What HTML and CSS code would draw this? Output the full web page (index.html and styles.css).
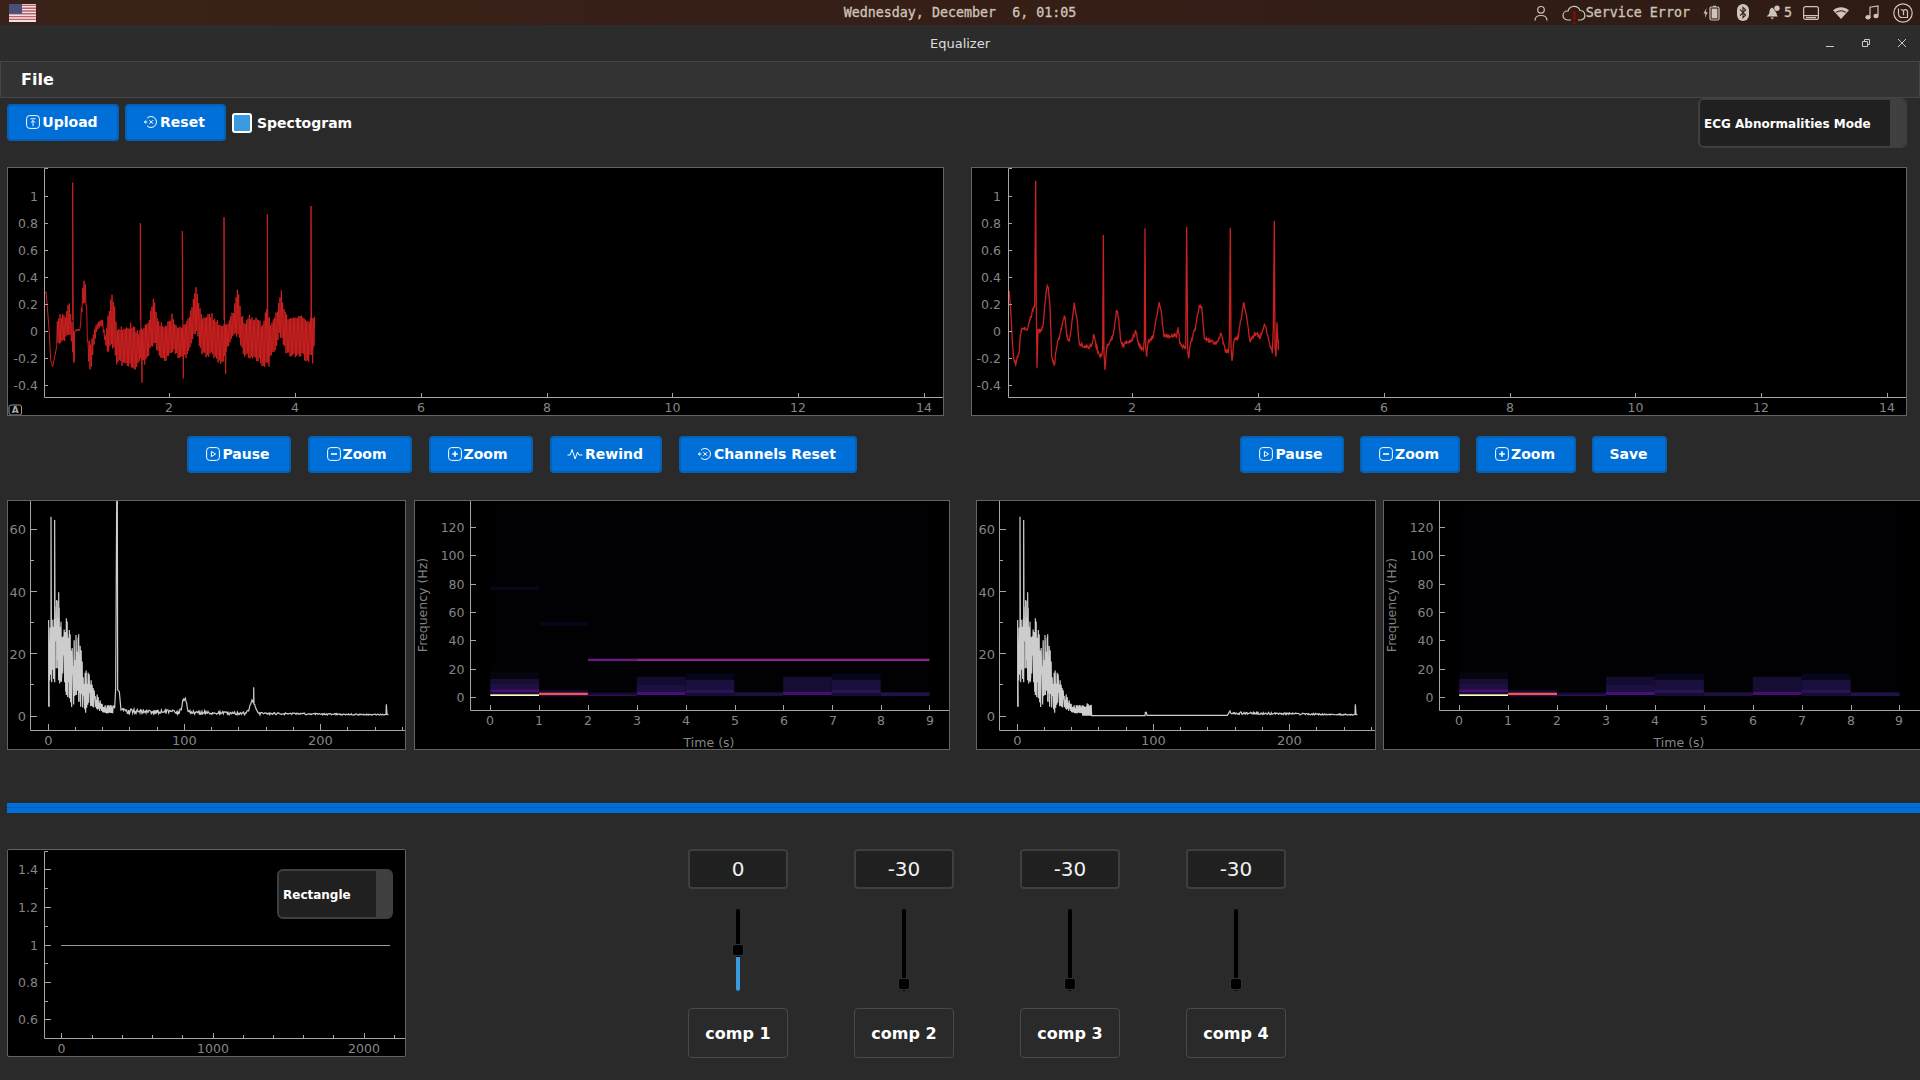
FILE: index.html
```html
<!DOCTYPE html>
<html lang="en">
<head>
<meta charset="utf-8">
<title>Equalizer</title>
<link rel="stylesheet" href="styles.css">
</head>
<body>
<svg class="sprite" aria-hidden="true">
  <symbol id="i-upload" viewBox="0 0 14 14"><rect x=".6" y=".6" width="12.800" height="12.800" rx="3"/><path d="M4.500 3.800h5M7 11V5.600M4.900 7.600 7 5.500l2.100 2.100"/></symbol>
  <symbol id="i-play" viewBox="0 0 14 14"><rect x=".6" y=".6" width="12.800" height="12.800" rx="3"/><path d="M5.400 4.400v5.200L9.600 7z"/></symbol>
  <symbol id="i-minus" viewBox="0 0 14 14"><rect x=".6" y=".6" width="12.800" height="12.800" rx="3"/><path class="thick" d="M4 7h6"/></symbol>
  <symbol id="i-plus" viewBox="0 0 14 14"><rect x=".6" y=".6" width="12.800" height="12.800" rx="3"/><path class="thick" d="M4.200 7h5.600M7 4.200v5.600"/></symbol>
  <symbol id="i-reset" viewBox="0 0 14 14"><path d="M3 3.200A5.500 5.500 0 1 1 3 10.800"/><path d="M5.400 5.200l3.600 3.600M9 5.200 5.400 8.800"/><path d="M.4 7h3M2.200 5.400.4 7l1.800 1.600"/></symbol>
  <symbol id="i-pulse" viewBox="0 0 16 14"><path d="M.5 8h2.600l2-5.500 3 9.500 2.400-7 1.400 3h3.600"/></symbol>
</svg>

<header class="topbar">
  <div class="topbar-left">
    <svg class="flag" viewBox="0 0 27 18" width="27" height="18">
      <rect width="27" height="18" fill="#e8e3e3"/>
      <path d="M0 1.400h27M0 4.200h27M0 7h27M0 9.800h27M0 12.600h27M0 15.400h27" stroke="#c4606a" stroke-width="1.400"/>
      <rect width="13" height="9.800" fill="#4a4f78"/>
    </svg>
  </div>
  <div class="clock">Wednesday, December  6, 01:05</div>
  <div class="tray">
    <svg class="tray-icon user" viewBox="0 0 14 16" width="14" height="16"><circle cx="7" cy="4.800" r="3.300"/><path d="M1 15.500c0-3.400 2.600-5 6-5s6 1.600 6 5"/></svg>
    <span class="cloud-item">
      <svg class="tray-icon" viewBox="0 0 24 24" width="24" height="24"><path d="M9 19H5.500a4.500 4.500 0 0 1 0-9H6a6.300 6.300 0 0 1 12-.5 4.800 4.800 0 0 1 1 9.500h-3"/><path class="alert" d="M12.500 10v9M12.500 21v2"/></svg>
      <span class="tray-text">Service Error</span>
    </span>
    <svg class="tray-icon battery" viewBox="0 0 17 16" width="17" height="16"><path class="solid" d="M3.500 3 .5 8.600h2L1.800 13l3-5.800h-2z"/><rect x="7" y="2" width="9" height="13" rx="1.500"/><path class="solid" d="M10 .7h3v1.300h-3z"/><rect class="solid" x="8.600" y="3.600" width="5.800" height="9.800"/></svg>
    <svg class="tray-icon bt" viewBox="0 0 12 17" width="12" height="17"><rect class="solid" x="0" y="0" width="12" height="17" rx="6"/><path class="cut" d="M3 5.300 8.600 11 6 13.600V3.400L8.600 6 3 11.700"/></svg>
    <span class="bell-item">
      <svg class="tray-icon" viewBox="0 0 15 15" width="15" height="15"><path class="solid" d="M6.500 2.500c-2.500.5-3 2.500-3 4.500 0 2-1.500 3-3 4.500h11.500c-1-1-1.500-2-1.500-3.500zM4.500 12.500h3.500l-1.800 2z"/><circle class="solid" cx="11" cy="3.200" r="2.700"/></svg>
      <span class="tray-text">5</span>
    </span>
    <svg class="tray-icon drive" viewBox="0 0 16 14" width="16" height="14"><rect x=".6" y=".6" width="14.800" height="12.800" rx="2"/><path d="M1 9.700h14M3 11.600h10"/></svg>
    <svg class="tray-icon wifi" viewBox="0 0 16 12" width="16" height="12"><path class="solid" d="M0 3.200C4.500-.9 11.500-.9 16 3.200L8 12z"/><path class="cut" d="M3 5.400c3-2 7-2 10 0"/></svg>
    <svg class="tray-icon music" viewBox="0 0 14 15" width="14" height="15"><path d="M5 12V2.200L13 1v9.500"/><ellipse class="solid" cx="3" cy="12.200" rx="2.600" ry="2.200"/><ellipse class="solid" cx="11" cy="11" rx="2.600" ry="2.200"/></svg>
    <svg class="tray-icon mint" viewBox="0 0 20 20" width="20" height="20"><circle cx="10" cy="10" r="9.200"/><path d="M5.500 5.500v5.500a3.500 3.500 0 0 0 3.500 3.500h5.500V8.700a2 2 0 0 0-4 0v3.500M10.500 8.700a2 2 0 0 0-2.700-1.800"/></svg>
  </div>
</header>

<div class="titlebar">
  <span></span>
  <span class="title">Equalizer</span>
  <div class="win-controls">
    <svg viewBox="0 0 8 8" width="8" height="8"><path d="M0 7.500h8"/></svg>
    <svg viewBox="0 0 8 8" width="8" height="8"><path d="M.5 2.500h5v5h-5zM2.500 2.500V.5h5v5h-2"/></svg>
    <svg viewBox="0 0 8 8" width="8" height="8"><path d="M0 0l8 8M8 0 0 8"/></svg>
  </div>
</div>

<nav class="menubar"><span class="menu-item">File</span></nav>

<section class="toolbar">
  <button class="btn w-upload"><svg class="ico"><use href="#i-upload"/></svg>Upload</button>
  <button class="btn w-reset"><svg class="ico"><use href="#i-reset"/></svg> Reset</button>
  <label class="check"><span class="check-box"></span>Spectogram</label>
  <div class="combo combo-mode"><span class="combo-text">ECG Abnormalities Mode</span><span class="combo-arrow"></span></div>
</section>

<section class="wave-row">
  <div class="plot">
    <svg class="chart" viewBox="8 168 935 247" width="935" height="247">
      <path class="wave" id="wave-noisy"/>
      <path class="axis" d="M48 168.500h-3.500V397.500H943M44 196.500h4M44 223.500h4M44 250.500h4M44 277.500h4M44 304.500h4M44 331.500h4M44 358.500h4M44 385.500h4M169.500 397v-4M295.500 397v-4M421.500 397v-4M547.500 397v-4M672.500 397v-4M798.500 397v-4M924.500 397v-4"/>
      <g class="lbl end">
        <text x="38" y="201">1</text><text x="38" y="228">0.8</text><text x="38" y="255">0.6</text><text x="38" y="282">0.4</text><text x="38" y="309">0.2</text><text x="38" y="336">0</text><text x="38" y="363">-0.2</text><text x="38" y="390">-0.4</text>
      </g>
      <g class="lbl mid">
        <text x="169" y="412">2</text><text x="295" y="412">4</text><text x="421" y="412">6</text><text x="547" y="412">8</text><text x="672.500" y="412">10</text><text x="798" y="412">12</text><text x="924" y="412">14</text>
      </g>
      <rect class="auto-box" x="9" y="405" width="12.500" height="10" rx="2"/>
      <text class="auto-a" x="15.200" y="412.800">A</text>
    </svg>
  </div>
  <div class="plot">
    <svg class="chart" viewBox="972 168 934 247" width="934" height="247">
      <path class="wave wave-clean" id="wave-clean"/>
      <path class="axis" d="M1012 168.500h-3.500V397.500H1906M1008 196.500h4M1008 223.500h4M1008 250.500h4M1008 277.500h4M1008 304.500h4M1008 331.500h4M1008 358.500h4M1008 385.500h4M1132.500 397v-4M1258.500 397v-4M1384.500 397v-4M1510.500 397v-4M1635.500 397v-4M1761.500 397v-4M1887.500 397v-4"/>
      <g class="lbl end">
        <text x="1001" y="201">1</text><text x="1001" y="228">0.8</text><text x="1001" y="255">0.6</text><text x="1001" y="282">0.4</text><text x="1001" y="309">0.2</text><text x="1001" y="336">0</text><text x="1001" y="363">-0.2</text><text x="1001" y="390">-0.4</text>
      </g>
      <g class="lbl mid">
        <text x="1132" y="412">2</text><text x="1258" y="412">4</text><text x="1384" y="412">6</text><text x="1510" y="412">8</text><text x="1635.500" y="412">10</text><text x="1761" y="412">12</text><text x="1887" y="412">14</text>
      </g>
    </svg>
  </div>
</section>

<section class="transport">
  <div class="btn-group group-left">
    <button class="btn w-104"><svg class="ico"><use href="#i-play"/></svg>Pause</button>
    <button class="btn w-104 btn-tail"><svg class="ico"><use href="#i-minus"/></svg>Zoom</button>
    <button class="btn w-104 btn-tail"><svg class="ico"><use href="#i-plus"/></svg>Zoom</button>
    <button class="btn w-112"><svg class="ico ico-wide"><use href="#i-pulse"/></svg>Rewind</button>
    <button class="btn w-178"><svg class="ico"><use href="#i-reset"/></svg>Channels Reset</button>
  </div>
  <div class="btn-group group-right">
    <button class="btn w-104"><svg class="ico"><use href="#i-play"/></svg>Pause</button>
    <button class="btn w-100"><svg class="ico"><use href="#i-minus"/></svg>Zoom</button>
    <button class="btn w-100"><svg class="ico"><use href="#i-plus"/></svg>Zoom</button>
    <button class="btn w-75">Save</button>
  </div>
</section>

<section class="analysis-row">
  <div class="plot plot-spectrum">
    <svg class="chart" viewBox="8 501 397 248" width="397" height="248">
      <path class="spec-line" id="spectrum-a"/>
      <path class="axis" d="M30.500 501V730.500H405M31 529.500h6M31 560.500h3M31 591.500h6M31 622.500h3M31 653.500h6M31 684.500h3M31 716.500h6M48.500 730v-6M75.500 730v-3M102.500 730v-3M129.500 730v-3M157.500 730v-3M184.500 730v-6M211.500 730v-3M238.500 730v-3M266.500 730v-3M293.500 730v-3M320.500 730v-6M347.500 730v-3M375.500 730v-3M402.500 730v-3"/>
      <g class="lbl end lbl-13"><text x="26" y="534">60</text><text x="26" y="596.500">40</text><text x="26" y="658.500">20</text><text x="26" y="721">0</text></g>
      <g class="lbl mid lbl-13"><text x="48.500" y="745">0</text><text x="184.500" y="745">100</text><text x="320.500" y="745">200</text></g>
    </svg>
  </div>
  <div class="plot plot-sgram">
    <svg class="chart" viewBox="415 501 534 248" width="534" height="248">
      <g id="sgram-a"></g>
      <path class="axis" d="M470.500 501V710.500H949M471 527.500h5M471 555.500h5M471 584.500h5M471 612.500h5M471 640.500h5M471 669.500h5M471 697.500h5M490.500 710v-5M539.500 710v-5M588.500 710v-5M637.500 710v-5M686.500 710v-5M735.500 710v-5M783.500 710v-5M832.500 710v-5M881.500 710v-5M929.500 710v-5"/>
      <g class="lbl end"><text x="464.500" y="532">120</text><text x="464.500" y="560">100</text><text x="464.500" y="589">80</text><text x="464.500" y="617">60</text><text x="464.500" y="645">40</text><text x="464.500" y="674">20</text><text x="464.500" y="702">0</text></g>
      <g class="lbl mid"><text x="490" y="725">0</text><text x="539" y="725">1</text><text x="588" y="725">2</text><text x="637" y="725">3</text><text x="686" y="725">4</text><text x="735" y="725">5</text><text x="784" y="725">6</text><text x="833" y="725">7</text><text x="881" y="725">8</text><text x="930" y="725">9</text></g>
      <text class="lbl mid" x="709" y="747">Time (s)</text>
      <text class="lbl mid" transform="translate(426.500 605) rotate(-90)">Frequency (Hz)</text>
    </svg>
  </div>
  <div class="plot plot-spectrum plot-spectrum-r">
    <svg class="chart" viewBox="977 501 398 248" width="398" height="248">
      <path class="spec-line" id="spectrum-c"/>
      <path class="axis" d="M999.500 501V730.500H1375M1000 529.500h6M1000 560.500h3M1000 591.500h6M1000 622.500h3M1000 653.500h6M1000 684.500h3M1000 716.500h6M1017.500 730v-6M1044.500 730v-3M1071.500 730v-3M1098.500 730v-3M1126.500 730v-3M1153.500 730v-6M1180.500 730v-3M1207.500 730v-3M1235.500 730v-3M1262.500 730v-3M1289.500 730v-6M1316.500 730v-3M1344.500 730v-3M1371.500 730v-3"/>
      <g class="lbl end lbl-13"><text x="995" y="534">60</text><text x="995" y="596.500">40</text><text x="995" y="658.500">20</text><text x="995" y="721">0</text></g>
      <g class="lbl mid lbl-13"><text x="1017.500" y="745">0</text><text x="1153.500" y="745">100</text><text x="1289.500" y="745">200</text></g>
    </svg>
  </div>
  <div class="plot plot-sgram plot-sgram-r">
    <svg class="chart" viewBox="1384 501 536 248" width="536" height="248">
      <g id="sgram-b"></g>
      <path class="axis" d="M1439.500 501V710.500H1920M1440 527.500h5M1440 555.500h5M1440 584.500h5M1440 612.500h5M1440 640.500h5M1440 669.500h5M1440 697.500h5M1459.500 710v-5M1508.500 710v-5M1557.500 710v-5M1606.500 710v-5M1655.500 710v-5M1704.500 710v-5M1753.500 710v-5M1802.500 710v-5M1851.500 710v-5M1899.500 710v-5"/>
      <g class="lbl end"><text x="1433.500" y="532">120</text><text x="1433.500" y="560">100</text><text x="1433.500" y="589">80</text><text x="1433.500" y="617">60</text><text x="1433.500" y="645">40</text><text x="1433.500" y="674">20</text><text x="1433.500" y="702">0</text></g>
      <g class="lbl mid"><text x="1459" y="725">0</text><text x="1508" y="725">1</text><text x="1557" y="725">2</text><text x="1606" y="725">3</text><text x="1655" y="725">4</text><text x="1704" y="725">5</text><text x="1753" y="725">6</text><text x="1802" y="725">7</text><text x="1851" y="725">8</text><text x="1899" y="725">9</text></g>
      <text class="lbl mid" x="1679" y="747">Time (s)</text>
      <text class="lbl mid" transform="translate(1395.500 605) rotate(-90)">Frequency (Hz)</text>
    </svg>
  </div>
</section>

<div class="position-slider"></div>

<section class="eq-row">
  <div class="plot plot-window">
    <svg class="chart" viewBox="8 850 397 206" width="397" height="206">
      <path class="win-line" d="M61 945.500H390"/>
      <path class="axis" d="M48 851.500h-3.500V1038.500H405M45 869.500h6M45 888.500h3M45 907.500h6M45 926.500h3M45 945.500h6M45 963.500h3M45 982.500h6M45 1001.500h3M45 1019.500h6M61.500 1038v-5M92.500 1038v-3M122.500 1038v-3M152.500 1038v-3M182.500 1038v-3M213.500 1038v-5M243.500 1038v-3M273.500 1038v-3M303.500 1038v-3M333.500 1038v-3M364.500 1038v-5M394.500 1038v-3"/>
      <g class="lbl end"><text x="38" y="874">1.4</text><text x="38" y="912">1.2</text><text x="38" y="950">1</text><text x="38" y="987">0.8</text><text x="38" y="1024">0.6</text></g>
      <g class="lbl mid"><text x="61.500" y="1053">0</text><text x="213" y="1053">1000</text><text x="364" y="1053">2000</text></g>
    </svg>
    <div class="combo combo-window"><span class="combo-text">Rectangle</span><span class="combo-arrow"></span></div>
  </div>
  <div class="bands">
    <div class="band">
      <div class="band-value">0</div>
      <div class="track"><span class="track-fill"></span><span class="handle handle-mid"></span></div>
      <div class="band-label">comp 1</div>
    </div>
    <div class="band">
      <div class="band-value">-30</div>
      <div class="track"><span class="handle handle-min"></span></div>
      <div class="band-label">comp 2</div>
    </div>
    <div class="band">
      <div class="band-value">-30</div>
      <div class="track"><span class="handle handle-min"></span></div>
      <div class="band-label">comp 3</div>
    </div>
    <div class="band">
      <div class="band-value">-30</div>
      <div class="track"><span class="handle handle-min"></span></div>
      <div class="band-label">comp 4</div>
    </div>
  </div>
</section>
<script src="charts.js"></script>
</body>
</html>
```
FILE: styles.css
```css
* { box-sizing: border-box; }
html, body { margin: 0; padding: 0; }
body {
  width: 1920px;
  height: 1080px;
  overflow: hidden;
  background: #2a2a2a;
  color: #fff;
  font-family: "DejaVu Sans", sans-serif;
}
.sprite { position: absolute; width: 0; height: 0; }

/* Desktop top bar */
.topbar {
  height: 25px;
  display: grid;
  grid-template-columns: 1fr auto 1fr;
  align-items: center;
  background: linear-gradient(90deg, #3b2218, #2f1b15);
  color: #d0c4b8;
  font-family: "DejaVu Sans Mono", monospace;
  font-size: 13.33px;
  -webkit-text-stroke: 0.3px #d0c4b8;
}
.topbar-left { padding-left: 9px; display: flex; }
.flag { display: block; }
.clock { white-space: pre; }
.tray { display: flex; align-items: center; justify-content: flex-end; padding-right: 7px; }
.tray-icon { display: block; fill: none; stroke: #d0c4b8; stroke-width: 1.2; flex: none; }
.tray-icon .solid { fill: #d0c4b8; stroke: none; }
.tray-icon .cut { stroke: #33201a; fill: none; stroke-width: 1.1; }
.tray-icon .alert { stroke: #b00000; stroke-width: 1.6; }
.cloud-item, .bell-item { display: flex; align-items: center; }
.tray-text { line-height: 25px; }
.user { margin-right: 14px; }
.cloud-item { margin-right: 13px; }
.battery { margin-right: 17px; }
.bt { margin-right: 17px; }
.bell-item { margin-right: 11px; }
.bell-item .tray-text { margin-left: 3px; }
.drive { margin-right: 14px; }
.wifi { margin-right: 16px; }
.music { margin-right: 14px; }

/* Window title */
.titlebar {
  height: 36px;
  display: grid;
  grid-template-columns: 1fr auto 1fr;
  align-items: center;
  background: #2c2c2c;
}
.title { font-size: 13px; color: #dcdcdc; }
.win-controls { display: flex; justify-content: flex-end; gap: 28px; padding-right: 14px; }
.win-controls svg { fill: none; stroke: #c8c8c8; stroke-width: 1; display: block; }

.menubar {
  height: 37px;
  display: flex;
  align-items: center;
  padding-left: 20px;
  background: #333;
  border: 1px solid #454545;
}
.menu-item { font-size: 16px; font-weight: 700; }

/* Buttons */
.btn {
  height: 37px;
  margin: 0;
  padding: 0 2px 2px 0;
  display: inline-flex;
  align-items: center;
  justify-content: center;
  gap: 2px;
  background: #0070d8;
  border: 2px solid #0660b4;
  border-radius: 4px;
  color: #fff;
  font: 700 14px "DejaVu Sans", sans-serif;
  flex: none;
}
.btn-tail { padding-right: 7px; }
.ico { width: 14px; height: 14px; fill: none; stroke: #fff; stroke-width: 1; flex: none; }
.ico-wide { width: 16px; }
.thick { stroke-width: 1.6; }
.w-upload { width: 112px; }
.w-reset { width: 101px; }
.w-104 { width: 104px; }
.w-112 { width: 112px; }
.w-178 { width: 178px; }
.w-100 { width: 100px; }
.w-75 { width: 75px; }

.toolbar {
  height: 69px;
  display: flex;
  align-items: flex-start;
  gap: 6px;
  padding-left: 7px;
  padding-right: 13px;
}
.toolbar .btn { margin-top: 6px; }
.check {
  display: flex;
  align-items: center;
  gap: 5px;
  margin-top: 15px;
  font-size: 14px;
  font-weight: 700;
}
.check-box {
  width: 20px;
  height: 20px;
  background: #3a9ae0;
  border: 2px solid #fff;
  border-radius: 3px;
}

/* Combo boxes */
.combo {
  display: flex;
  align-items: center;
  height: 50px;
  padding-top: 0;
  background: #202020;
  border: 2px solid #3f3f3f;
  border-radius: 6px;
  font-size: 12px;
  font-weight: 700;
  overflow: hidden;
}
.combo-text { flex: 1; padding-left: 4px; padding-top: 1px; }
.combo-arrow { width: 15px; height: 100%; background: #404040; }
.combo-mode { width: 209px; margin-left: auto; }
.combo-window { position: absolute; left: 269px; top: 19px; width: 116px; }

/* Plots */
.plot {
  background: #000;
  border: 1px solid #636363;
  flex: none;
  overflow: hidden;
}
.chart { display: block; }
.axis { fill: none; stroke: #a6a6a6; stroke-width: 1; }
.wave { fill: none; stroke: #c92020; stroke-width: 1; }
.wave-clean { stroke-width: 1.3; }
.spec-line { fill: none; stroke: #cdcdcd; stroke-width: 1.2; }
.win-line { fill: none; stroke: #9a9a9a; stroke-width: 1; }
.lbl { fill: #858585; font-size: 12.5px; font-family: "DejaVu Sans", sans-serif; }
.lbl-13 { font-size: 13px; }
.end { text-anchor: end; }
.mid { text-anchor: middle; }
.auto-box { fill: none; stroke: #9a9a9a; stroke-width: 1; }
.auto-a { fill: #a8a8a8; font-size: 9px; font-weight: 700; text-anchor: middle; }

.wave-row {
  height: 249px;
  display: grid;
  grid-template-columns: 937px 936px;
  column-gap: 27px;
  padding-left: 7px;
}
.transport {
  height: 84px;
  display: grid;
  grid-template-columns: 937px 936px;
  column-gap: 27px;
  padding-left: 7px;
  padding-top: 20px;
}
.btn-group { display: flex; align-items: flex-start; }
.group-left { padding-left: 180px; gap: 17px; }
.group-right { padding-left: 269px; gap: 16px; }

.analysis-row {
  height: 250px;
  display: flex;
  padding-left: 7px;
}
.analysis-row .plot { height: 250px; }
.plot-spectrum { width: 399px; }
.plot-sgram { width: 536px; margin-left: 8px; }
.plot-spectrum-r { width: 400px; margin-left: 26px; }
.plot-sgram-r { width: 540px; margin-left: 7px; }

.position-slider {
  height: 10px;
  margin: 53px 0 0 7px;
  background: linear-gradient(180deg, #0070d8 0 4px, #0060b8 4px 5px, #0070d8 5px);
}

/* Equalizer */
.eq-row {
  display: flex;
  align-items: flex-start;
  padding-left: 7px;
  margin-top: 36px;
}
.plot-window { position: relative; width: 399px; height: 208px; border-radius: 2px; }
.bands {
  display: grid;
  grid-template-columns: repeat(4, 100px);
  column-gap: 66px;
  margin-left: 282px;
}
.band { display: flex; flex-direction: column; align-items: center; }
.band-value {
  width: 100px;
  height: 40px;
  display: flex;
  align-items: center;
  justify-content: center;
  background: #202020;
  border: 2px solid #3f3f3f;
  border-radius: 4px;
  font-size: 20px;
  color: #f0f0f0;
}
.track {
  position: relative;
  width: 4px;
  height: 82px;
  margin-top: 20px;
  background: #000;
  border-radius: 2px;
}
.track-fill {
  position: absolute;
  left: 0;
  right: 0;
  top: 48px;
  bottom: 0;
  background: #3a9ae0;
  border-radius: 0 0 2px 2px;
}
.handle {
  position: absolute;
  left: -4px;
  width: 12px;
  height: 12px;
  background: #000;
  border: 1px solid #333;
  border-radius: 3px;
}
.handle-mid { top: 35px; }
.handle-min { top: 69px; }
.band-label {
  width: 100px;
  height: 50px;
  margin-top: 17px;
  display: flex;
  align-items: center;
  justify-content: center;
  border: 1px solid #4a4a4a;
  border-radius: 4px;
  font-size: 16px;
  font-weight: 700;
}
```
FILE: charts.js
```js
// Builds the plotted signals of the equalizer from a seeded generator, so the
// curves are the same on each load. Input points are in reference-crop units
// (3 units per pixel) and get mapped to page coordinates by the viewBoxes.
(function () {
  function rng(seed) {
    return function () {
      seed |= 0; seed = seed + 0x6D2B79F5 | 0;
      var t = Math.imul(seed ^ seed >>> 15, 1 | seed);
      t = t + Math.imul(t ^ t >>> 7, 61 | t) ^ t;
      return ((t ^ t >>> 14) >>> 0) / 4294967296;
    };
  }
  function lerp(pts, x) {
    if (x <= pts[0][0]) return pts[0][1];
    for (var i = 1; i < pts.length; i++) {
      if (x <= pts[i][0]) {
        var a = pts[i - 1], b = pts[i];
        return a[1] + (b[1] - a[1]) * (x - a[0]) / (b[0] - a[0]);
      }
    }
    return pts[pts.length - 1][1];
  }
  function mapper(ox, oy) {
    return function (x, y) { return (ox + x / 3).toFixed(2) + ' ' + (oy + y / 3).toFixed(2); };
  }

  // Denoised ECG
  var ecg = [[145,395],[148,395],[150,425],[153,465],[158,560],[162,600],[167,615],[172,590],[178,575],[181,525],[185,510],[195,505],[200,510],[210,480],[220,445],[224,440],[227,62],[229,440],[231,625],[234,510],[245,512],[250,490],[255,430],[260,385],[265,380],[270,440],[275,590],[283,617],[290,560],[300,520],[310,480],[315,470],[320,530],[328,545],[335,490],[343,430],[350,470],[358,550],[370,560],[385,562],[395,555],[402,525],[410,565],[424,590],[428,570],[430,225],[432,580],[435,630],[440,565],[450,545],[460,525],[470,452],[475,470],[482,540],[490,560],[500,545],[515,545],[527,510],[535,550],[550,570],[553,540],[555,205],[557,560],[560,590],[565,545],[580,530],[590,470],[597,427],[603,450],[612,530],[625,530],[640,525],[650,530],[654,502],[660,550],[677,565],[680,200],[683,570],[686,595],[692,545],[705,510],[718,435],[725,440],[733,535],[750,545],[770,550],[782,520],[795,570],[805,580],[808,540],[811,203],[813,560],[816,603],[822,545],[835,530],[851,427],[860,470],[870,545],[885,520],[900,530],[915,497],[925,535],[937,580],[940,500],[943,183],[945,560],[948,590],[951,487],[955,570],[955,540]];
  (function () {
    var m = mapper(960, 160), r = rng(11), d = 'M' + m(ecg[0][0], ecg[0][1]);
    for (var i = 1; i < ecg.length; i++) {
      var a = ecg[i - 1], b = ecg[i], len = b[0] - a[0];
      if (len >= 4) {
        for (var x = a[0] + 1.5; x < b[0]; x += 1.5) {
          var y = a[1] + (b[1] - a[1]) * (x - a[0]) / len + (r() - 0.5) * 14;
          d += 'L' + m(x, y);
        }
      }
      d += 'L' + m(b[0], b[1]);
    }
    document.getElementById('wave-clean').setAttribute('d', d);
  })();

  // Noisy ECG
  var top = [[170,490],[180,460],[195,465],[208,420],[213,470],[222,510],[240,505],[248,380],[254,335],[260,430],[264,540],[275,540],[285,500],[300,480],[308,478],[315,530],[322,480],[335,395],[342,420],[350,495],[370,497],[395,485],[415,510],[430,500],[445,480],[462,402],[470,470],[480,485],[500,485],[518,458],[530,500],[545,500],[565,470],[578,420],[589,375],[598,440],[610,470],[635,455],[655,480],[665,490],[685,480],[700,450],[713,377],[722,450],[735,485],[750,460],[775,470],[785,490],[800,440],[815,490],[830,450],[843,377],[852,440],[865,470],[885,460],[905,455],[920,480],[930,465],[945,470]];
  var bot = [[170,555],[185,555],[205,530],[212,540],[222,605],[226,515],[240,512],[248,440],[258,440],[264,600],[272,650],[280,570],[290,515],[305,495],[315,545],[322,585],[335,560],[350,615],[375,620],[395,625],[410,630],[420,600],[435,615],[450,580],[465,555],[480,605],[500,605],[520,575],[540,605],[560,595],[580,540],[590,530],[605,595],[630,590],[650,610],[668,615],[685,560],[700,530],[715,530],[730,590],[750,600],[775,605],[795,630],[810,600],[825,580],[840,530],[860,590],[880,595],[905,595],[925,610],[945,565]];
  (function () {
    var m = mapper(0, 160), r = rng(23);
    var head = [[135,400],[138,395],[142,440],[148,520],[152,600],[158,620],[165,585],[170,560]];
    var d = 'M' + head.map(function (p) { return m(p[0], p[1]); }).join('L');
    var i = 0;
    for (var x = 170; x < 946; x += 2, i++) {
      var t = lerp(top, x), b = lerp(bot, x), span = b - t;
      var y = i % 2 ? t + r() * span * 0.14 : b - r() * span * 0.14;
      d += 'L' + m(x, y);
    }
    [[218,68,222,608],[421,190,426,668],[547,213,550,655],[672,172,677,642],[802,163,807,620],[933,138,938,610]].forEach(function (s) {
      d += 'M' + m(s[0], 480) + 'L' + m(s[0], s[1]) + 'L' + m(s[0] + 1.5, 480) + 'L' + m(s[2], s[3]) + 'L' + m(s[2] + 1, 530);
    });
    document.getElementById('wave-noisy').setAttribute('d', d);
  })();

  // Magnitude spectra
  var specTop = [[146,375],[150,375],[153,200],[157,200],[160,400],[164,200],[168,330],[176,290],[183,380],[190,400],[200,370],[208,410],[220,430],[228,420],[236,418],[245,475],[255,515],[265,530],[280,575],[295,605],[310,630],[340,630]];
  var specBot = [[146,635],[150,530],[160,605],[170,520],[178,570],[190,550],[200,610],[208,615],[218,645],[228,590],[238,630],[250,650],[255,660],[265,630],[285,640],[310,655],[340,655]];
  var peaks = [[153,65,530],[164,75,520],[170,315,520],[176,292,520],[183,380,560],[199,370,600],[208,405,610],[228,420,600],[236,418,620],[146,375,635]];
  function lowBand(m, shift) {
    var r = rng(37), d = 'M' + m(146 + shift, 635), i = 0;
    for (var x = 146; x < 340; x += 1.5, i++) {
      var t = lerp(specTop, x), b = lerp(specBot, x), span = b - t;
      var y = i % 2 ? t + Math.pow(r(), 2) * span * 0.5 : b - Math.pow(r(), 2) * span * 0.5;
      d += 'L' + m(x + shift, y);
    }
    var tail = m(x + shift, y);
    peaks.forEach(function (p) {
      d += 'M' + m(p[0] + shift, p[2]) + 'L' + m(p[0] + shift, p[1]) + 'L' + m(p[0] + shift + 1.5, p[2]);
    });
    return d + 'M' + tail;
  }
  function gauss(x, c, w) { return Math.exp(-(x - c) * (x - c) / (2 * w * w)); }
  (function () {
    var m = mapper(0, 495), r = rng(51), d = lowBand(m, 0);
    d += 'L' + m(344, 640) + 'L' + m(347, 580) + 'L' + m(350, 20) + 'L' + m(352, 20) + 'L' + m(353, 585) + 'L' + m(358, 590) + 'L' + m(363, 645);
    for (var x = 366; x < 1155; x += 2) {
      var base = lerp([[366,648],[700,655],[1150,659]], x) - 42 * gauss(x, 553, 6) - 40 * gauss(x, 757, 7);
      var amp = lerp([[366,16],[700,10],[900,5],[1150,3]], x);
      d += 'L' + m(x, base + (r() - 0.5) * amp);
    }
    d += 'L' + m(1158, 658) + 'L' + m(1159, 628) + 'L' + m(1161, 658) + 'L' + m(1165, 660);
    d += 'M' + m(761, 625) + 'L' + m(761, 577) + 'L' + m(762, 625);
    document.getElementById('spectrum-a').setAttribute('d', d);
  })();
  (function () {
    var m = mapper(970, 495), r = rng(61), d = lowBand(m, -3);
    for (var x = 338; x < 366; x += 1.5) {
      d += 'L' + m(x, x % 3 < 1.5 ? 624 + r() * 14 : 662);
    }
    d += 'L' + m(525, 662) + 'L' + m(526, 652) + 'L' + m(529, 652) + 'L' + m(531, 661) + 'L' + m(772, 661) + 'L' + m(780, 648);
    for (x = 782; x < 1150; x += 2) {
      var base = lerp([[782,654],[1150,659]], x);
      d += 'L' + m(x, base + (r() - 0.5) * lerp([[782,8],[1150,3]], x));
    }
    d += 'L' + m(1155, 658) + 'L' + m(1156, 628) + 'L' + m(1158, 658) + 'L' + m(1162, 660);
    document.getElementById('spectrum-c').setAttribute('d', d);
  })();

  // Spectrograms: per second, rows of [top, bottom, colour] in crop units.
  var cols = [
    [[530,552,'#05040f'],[552,565,'#170e33'],[565,583,'#1e1040'],[583,592,'#4a1070'],[592,598,'#1e0f40'],[598,603,'#fcfdbf']],
    [[584,593,'#120a2b'],[593,600,'#f0584f'],[600,604,'#2a1050']],
    [[592,597,'#120a2b'],[598,603,'#2a0f5a']],
    [[545,570,'#140c30'],[570,590,'#1c1040'],[590,600,'#45107a']],
    [[535,555,'#07051a'],[555,585,'#1a0f3d'],[585,595,'#2a1458'],[595,603,'#170e33']],
    [[592,603,'#1e1040']],
    [[545,590,'#150d32'],[590,600,'#450f70']],
    [[535,555,'#07051a'],[555,585,'#1a0f3d'],[585,595,'#2a1458'],[595,603,'#170e33']],
    [[592,603,'#21124a']]
  ];
  var NS = 'http://www.w3.org/2000/svg';
  function rect(g, x, y, w, h, fill) {
    var el = document.createElementNS(NS, 'rect');
    el.setAttribute('x', x); el.setAttribute('y', y);
    el.setAttribute('width', w); el.setAttribute('height', h);
    el.setAttribute('fill', fill);
    g.appendChild(el);
  }
  function sgram(id, x0, w, withNotch) {
    var g = document.getElementById(id);
    rect(g, x0, 505, w * 9, 195, '#010104');
    cols.forEach(function (rows, c) {
      rows.forEach(function (row) {
        rect(g, x0 + c * w, 495 + row[0] / 3, w, (row[1] - row[0]) / 3, row[2]);
      });
    });
    if (withNotch) {
      rect(g, x0, 495 + 275 / 3, w, 10 / 3, '#0a0518');
      rect(g, x0 + w, 495 + 380 / 3, w, 12 / 3, '#08051a');
      rect(g, x0 + 2 * w, 495 + 491 / 3, w, 7 / 3, '#6a1a80');
      rect(g, x0 + 3 * w, 495 + 491 / 3, 6 * w, 7 / 3, '#8a2581');
    }
  }
  sgram('sgram-a', 490.3, 48.8, true);
  sgram('sgram-b', 1459.2, 48.93, false);
})();
```
